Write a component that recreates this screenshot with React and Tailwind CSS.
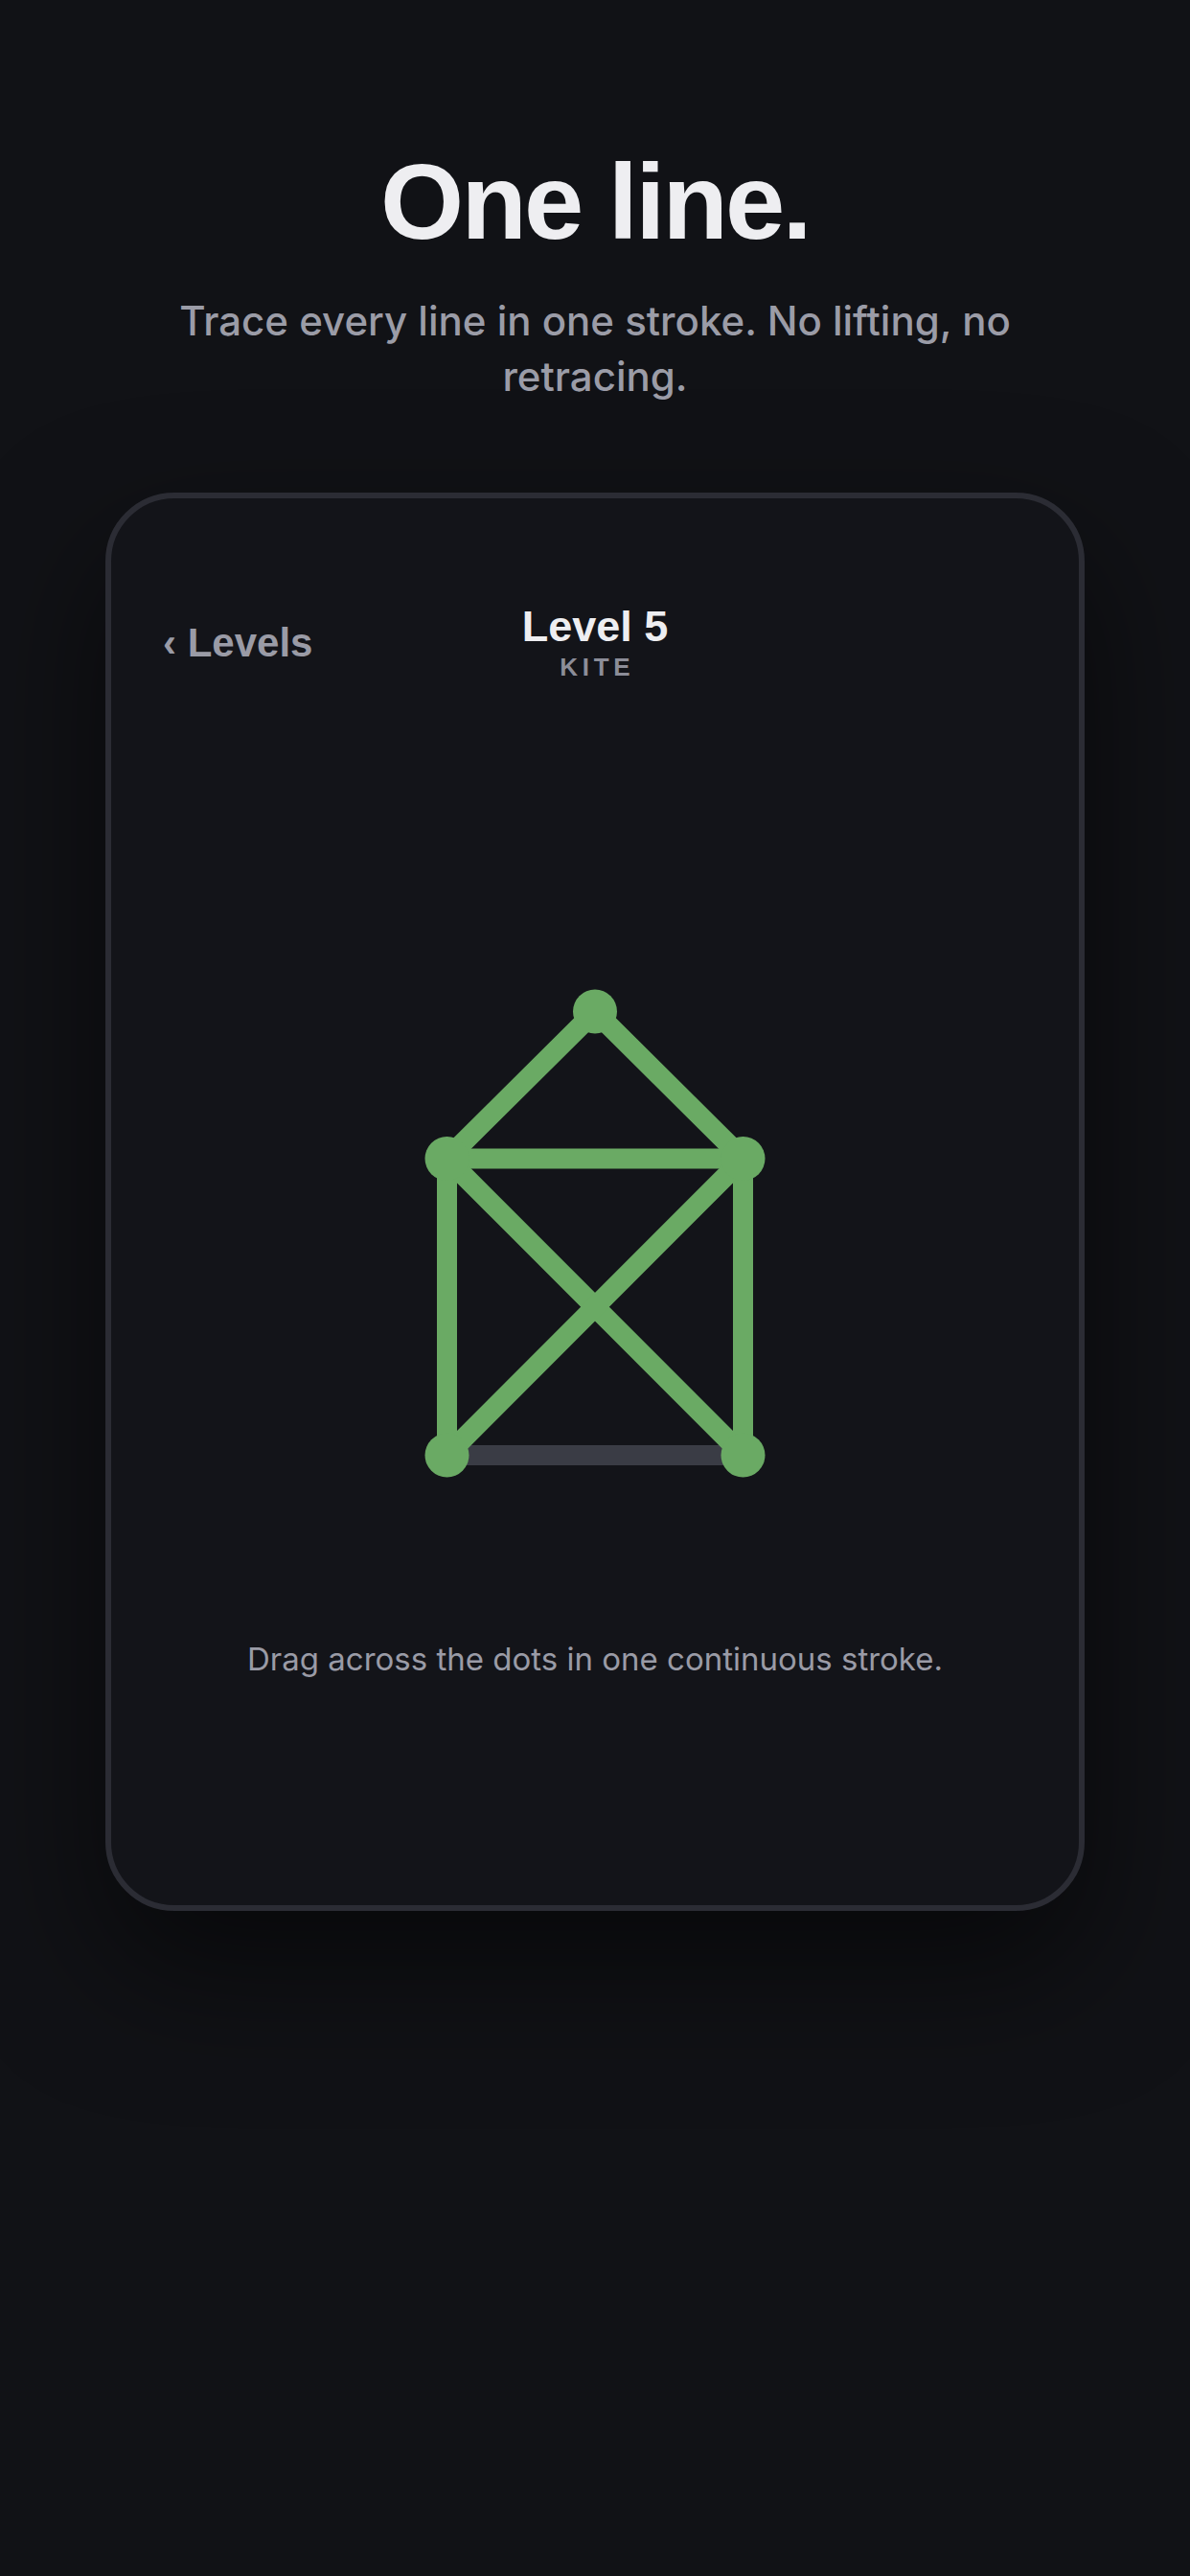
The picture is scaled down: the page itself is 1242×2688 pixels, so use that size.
import React from "react";

const nodes = {
    top: [200, 55.5],
    ml: [45.5, 209],
    mr: [354.5, 209],
    bl: [45.5, 518.5],
    br: [354.5, 518.5],
};

// Edges already traced (green) and the one still left (gray)
const traced = [
    ["top", "ml"],
    ["top", "mr"],
    ["ml", "mr"],
    ["ml", "bl"],
    ["mr", "br"],
    ["ml", "br"],
    ["mr", "bl"],
];
const remaining = [["bl", "br"]];

function Puzzle() {
    return (
        <svg width="400" height="560" viewBox="0 0 400 560" className="mx-auto block">
            {remaining.map(([a, b], i) => (
                <line
                    key={"r" + i}
                    x1={nodes[a][0]}
                    y1={nodes[a][1]}
                    x2={nodes[b][0]}
                    y2={nodes[b][1]}
                    stroke="#3a3c45"
                    strokeWidth="21"
                    strokeLinecap="butt"
                />
            ))}
            {traced.map(([a, b], i) => (
                <line
                    key={"t" + i}
                    x1={nodes[a][0]}
                    y1={nodes[a][1]}
                    x2={nodes[b][0]}
                    y2={nodes[b][1]}
                    stroke="#6aaa64"
                    strokeWidth="21"
                    strokeLinecap="round"
                />
            ))}
            {Object.entries(nodes).map(([k, [x, y]]) => (
                <circle key={k} cx={x} cy={y} r="23" fill="#6aaa64" />
            ))}
        </svg>
    );
}

export default function App() {
    return (
        <div className="min-h-[2688px] bg-[#111216] px-[110px] pt-[155px]">
            {/* Hero */}
            <h1 className="text-center text-[112px] leading-[112px] font-bold tracking-[-0.025em] text-[#eeeef1] font-['Liberation_Sans',Arial,sans-serif]">
                One line.
            </h1>
            <p className="mx-auto mt-[39px] max-w-[960px] text-center text-[42px] leading-[58px] font-medium text-[#9b9ca7] font-['Inter','Liberation_Sans',sans-serif]">
                Trace every line in one stroke. No lifting, no retracing.
            </p>

            {/* Game card */}
            <div className="mt-[92px] rounded-[72px] border-[6px] border-[#2b2c34] bg-[#131419] px-[54px] pt-[110px] pb-[237px] shadow-[0_60px_140px_rgba(0,0,0,0.55)]">
                <div className="grid grid-cols-3 items-center">
                    <button className="justify-self-start text-left text-[42px] leading-[48px] font-bold text-[#9a9ba6] font-['Liberation_Sans',Arial,sans-serif]">
                        ‹ Levels
                    </button>
                    <div className="text-center font-['Liberation_Sans',Arial,sans-serif]">
                        <div className="text-[45px] leading-[48px] font-bold text-[#eeeef1]">Level 5</div>
                        <div className="mt-[3px] text-[26px] leading-[30px] font-bold tracking-[0.18em] pl-[0.18em] text-[#8c8d98]">
                            KITE
                        </div>
                    </div>
                    <div />
                </div>

                <div className="mt-[289px]">
                    <Puzzle />
                </div>

                <p className="mt-[151px] text-center text-[33px] leading-[40px] text-[#9a9ba6] font-['Inter','Liberation_Sans',sans-serif]">
                    Drag across the dots in one continuous stroke.
                </p>
            </div>
        </div>
    );
}
